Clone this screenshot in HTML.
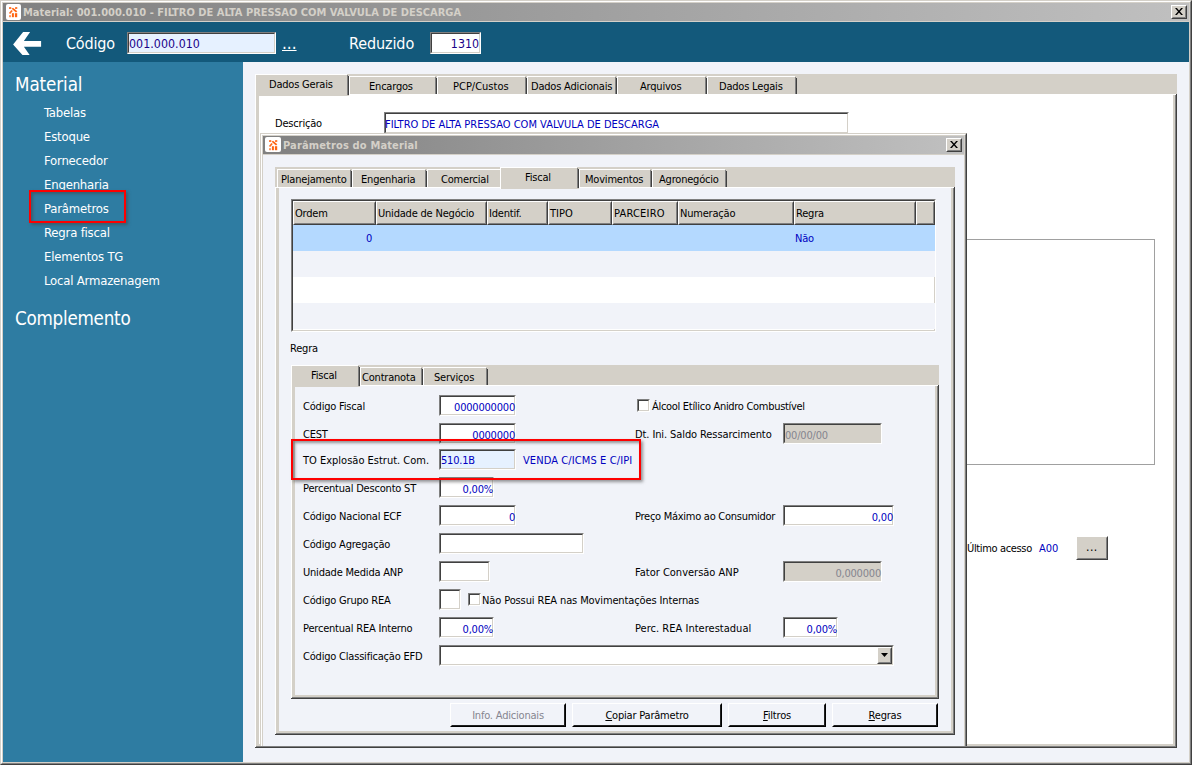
<!DOCTYPE html>
<html lang="pt-BR">
<head>
<meta charset="utf-8">
<title>Material: 001.000.010 - FILTRO DE ALTA PRESSAO COM VALVULA DE DESCARGA</title>
<style>
html,body{margin:0;padding:0;}
body{width:1192px;height:765px;overflow:hidden;background:#f1f3f9;position:relative;
 font-family:"DejaVu Sans Condensed","Liberation Sans",sans-serif;font-size:11px;color:#000;letter-spacing:-0.2px;}
.a{position:absolute;box-sizing:border-box;}
.t{position:absolute;white-space:nowrap;line-height:14px;height:14px;}
.nv{color:#0000c0;}
.dn{color:#180088;}
.up{letter-spacing:0;}
.gy{color:#85858f;}
.ed{position:absolute;box-sizing:border-box;background:#fff;border:1px solid;border-color:#808080 #fff #fff #808080;}
.ed:before{content:"";position:absolute;left:0;top:0;right:0;bottom:0;border:1px solid;border-color:#404040 #d4d0c8 #d4d0c8 #404040;}
.ed span{position:absolute;top:5px;line-height:14px;white-space:nowrap;}
.ed span.r{right:0px;}
.ed span.l{left:0px;}
.bt{position:absolute;box-sizing:border-box;border:1px solid;border-color:#fff #000 #000 #fff;text-align:center;line-height:24px;white-space:nowrap;}
.bt:before{content:"";position:absolute;left:0;top:0;right:0;bottom:0;border:1px solid;border-color:transparent #202020 #202020 transparent;}
.bt.cl{border-color:#fff #404040 #404040 #fff;}
.bt.cl:before{border-color:transparent #808080 #808080 transparent;}
.side{color:#fff;font-size:13px;line-height:16px;height:16px;left:44px;letter-spacing:-0.2px;}
.big{color:#fff;letter-spacing:0;}
.hd{position:absolute;box-sizing:border-box;background:#d4d0c8;border:1px solid;border-color:#fff #404040 #404040 #fff;top:201px;height:24px;line-height:24px;padding-left:1px;white-space:nowrap;overflow:hidden;}
.hd:before{content:"";position:absolute;left:0;top:0;right:0;bottom:0;border:1px solid;border-color:transparent #808080 #808080 transparent;}
.cb{position:absolute;box-sizing:border-box;width:13px;height:13px;background:#fff;border:1px solid;border-color:#808080 #fff #fff #808080;}
.cb:before{content:"";position:absolute;left:0;top:0;right:0;bottom:0;border:1px solid;border-color:#404040 #d4d0c8 #d4d0c8 #404040;}
.red{position:absolute;box-sizing:border-box;border:2px solid #fe0000;box-shadow:2px 2px 3px rgba(70,70,70,.55), inset 2px 2px 3px rgba(70,70,70,.55);}
</style>
</head>
<body>
<!-- window frame -->
<div class="a" style="left:0px;top:0px;width:1192px;height:765px;border:1px solid;border-color:#d4d0c8 #404040 #404040 #d4d0c8;"></div>
<div class="a" style="left:1px;top:1px;width:1190px;height:763px;border:1px solid;border-color:#fff #808080 #808080 #fff;"></div>
<div class="a" style="left:2px;top:2px;width:1188px;height:761px;border:1px solid #d4d0c8;"></div>
<div class="a" style="left:3px;top:3px;width:1186px;height:18px;background:linear-gradient(90deg,#808080,#c0c0c0);"></div>
<div class="a" style="left:3px;top:21px;width:1186px;height:1px;background:#d4d0c8;"></div>
<div class="a" style="left:5.500px;top:4.300px;width:15px;height:15.500px;background:#fff;border-radius:2px;"></div>
<svg class="a" style="left:5px;top:4px" width="15" height="15" viewBox="0 0 15 15"><g fill="#ff6410"><rect x="4" y="3" width="2.300" height="2" rx="0.600" opacity="0.850"/><rect x="10" y="3" width="2.300" height="2" rx="0.600" opacity="0.850"/><path d="M6.600 4.800L8 3.700L12.300 7.300L11 8.600z"/><path d="M3.900 8.900L6.400 6L7.800 7.100L5.200 10.100z" opacity="0.950"/><rect x="4.100" y="11.200" width="1.800" height="2" opacity="0.750"/><rect x="6.900" y="9.200" width="2" height="4"/><rect x="9.900" y="9.200" width="2.300" height="4"/></g></svg>
<div class="t" style="left:23px;top:6px;font-weight:bold;color:#d4d0c8;letter-spacing:0;">Material: 001.000.010 - FILTRO DE ALTA PRESSAO COM VALVULA DE DESCARGA</div>
<div class="bt cl" style="left:1171px;top:5px;width:16px;height:14px;background:#d4d0c8;"></div>
<svg class="a" style="left:1175px;top:8px" width="8" height="7" viewBox="0 0 8 7"><path d="M0 0h1.900L4 2.500 6.100 0H8L4.950 3.500 8 7H6.100L4 4.500 1.900 7H0L3.050 3.500z" fill="#000"/></svg>
<!-- header -->
<div class="a" style="left:3px;top:22px;width:1186px;height:40px;background:#13597b;"></div>
<svg class="a" style="left:13px;top:31px" width="30" height="26" viewBox="0 0 30 26"><path d="M0.100 13.600L10.100 0.900H17.100L10.900 9.900H28.100V15.800H10.900L16.650 24.100H9.450z" fill="#fff"/></svg>
<div class="t big" style="left:66px;top:33px;font-size:16px;line-height:22px;height:22px;letter-spacing:-0.2px;">Código</div>
<div class="ed" style="left:127px;top:32px;width:149px;height:22px;background:#e6f1ff;"><span class="l dn" style="font-size:12.300px;top:3px;left:1px;line-height:16px;letter-spacing:0.05px;">001.000.010</span></div>
<div class="t big" style="left:282px;top:33px;font-size:17px;line-height:20px;height:20px;letter-spacing:0;text-decoration:underline;">...</div>
<div class="t big" style="left:349px;top:33px;font-size:16px;line-height:22px;height:22px;letter-spacing:-0.1px;">Reduzido</div>
<div class="ed" style="left:430px;top:32px;width:51px;height:22px;background:#fff;"><span class="r dn" style="font-size:12.300px;top:3px;line-height:16px;letter-spacing:0;right:1px;">1310</span></div>
<!-- sidebar -->
<div class="a" style="left:3px;top:62px;width:240px;height:700px;background:#2e7ca2;"></div>
<div class="t big" style="left:15px;top:73px;font-size:18.670px;line-height:24px;height:24px;letter-spacing:-0.1px;">Material</div>
<div class="t side" style="top:105px;">Tabelas</div>
<div class="t side" style="top:129px;">Estoque</div>
<div class="t side" style="top:153px;">Fornecedor</div>
<div class="t side" style="top:177px;">Engenharia</div>
<div class="t side" style="top:201px;">Parâmetros</div>
<div class="t side" style="top:225px;">Regra fiscal</div>
<div class="t side" style="top:249px;">Elementos TG</div>
<div class="t side" style="top:273px;">Local Armazenagem</div>
<div class="t big" style="left:15px;top:307px;font-size:18.670px;line-height:24px;height:24px;letter-spacing:-0.25px;">Complemento</div>
<div class="red" style="left:29px;top:190px;width:97px;height:33px;"></div>
<!-- main tab control -->
<div class="a" style="left:255px;top:74px;width:922px;height:20px;background:#d4d0c8;"></div>
<div class="a" style="left:255px;top:94px;width:922px;height:654px;background:#fff;"></div>
<div class="a" style="left:255px;top:94px;width:922px;height:1px;background:#fff;"></div>
<div class="a" style="left:255px;top:94px;width:1px;height:654px;background:#fff;"></div>
<div class="a" style="left:256px;top:95px;width:3px;height:651px;background:#d4d0c8;"></div>
<div class="a" style="left:1173px;top:95px;width:2px;height:651px;background:#d4d0c8;"></div>
<div class="a" style="left:1175px;top:95px;width:1px;height:652px;background:#808080;"></div>
<div class="a" style="left:1176px;top:94px;width:1px;height:654px;background:#404040;"></div>
<div class="a" style="left:256px;top:744px;width:919px;height:2px;background:#d4d0c8;"></div>
<div class="a" style="left:256px;top:746px;width:920px;height:1px;background:#808080;"></div>
<div class="a" style="left:255px;top:747px;width:922px;height:1px;background:#404040;"></div>
<div class="a" style="left:255px;top:74px;width:94px;height:22px;background:#d4d0c8;"></div>
<div class="a" style="left:255px;top:74px;width:92px;height:1px;background:#fff;"></div>
<div class="a" style="left:255px;top:74px;width:1px;height:22px;background:#fff;"></div>
<div class="a" style="left:347px;top:75px;width:1px;height:20px;background:#808080;"></div>
<div class="a" style="left:348px;top:76px;width:1px;height:19px;background:#404040;"></div>
<div class="t " style="left:269px;top:78px;">Dados Gerais</div>
<div class="a" style="left:349px;top:76px;width:86px;height:1px;background:#fff;"></div>
<div class="a" style="left:349px;top:76px;width:1px;height:18px;background:#fff;"></div>
<div class="a" style="left:435px;top:77px;width:1px;height:17px;background:#808080;"></div>
<div class="a" style="left:436px;top:78px;width:1px;height:16px;background:#404040;"></div>
<div class="t " style="left:369px;top:80px;">Encargos</div>
<div class="a" style="left:437px;top:76px;width:88px;height:1px;background:#fff;"></div>
<div class="a" style="left:437px;top:76px;width:1px;height:18px;background:#fff;"></div>
<div class="a" style="left:525px;top:77px;width:1px;height:17px;background:#808080;"></div>
<div class="a" style="left:526px;top:78px;width:1px;height:16px;background:#404040;"></div>
<div class="t " style="left:453px;top:80px;"><span class="up">PCP/Custos</span></div>
<div class="a" style="left:527px;top:76px;width:88px;height:1px;background:#fff;"></div>
<div class="a" style="left:527px;top:76px;width:1px;height:18px;background:#fff;"></div>
<div class="a" style="left:615px;top:77px;width:1px;height:17px;background:#808080;"></div>
<div class="a" style="left:616px;top:78px;width:1px;height:16px;background:#404040;"></div>
<div class="t " style="left:531px;top:80px;">Dados Adicionais</div>
<div class="a" style="left:617px;top:76px;width:88px;height:1px;background:#fff;"></div>
<div class="a" style="left:617px;top:76px;width:1px;height:18px;background:#fff;"></div>
<div class="a" style="left:705px;top:77px;width:1px;height:17px;background:#808080;"></div>
<div class="a" style="left:706px;top:78px;width:1px;height:16px;background:#404040;"></div>
<div class="t " style="left:640px;top:80px;">Arquivos</div>
<div class="a" style="left:707px;top:76px;width:88px;height:1px;background:#fff;"></div>
<div class="a" style="left:707px;top:76px;width:1px;height:18px;background:#fff;"></div>
<div class="a" style="left:795px;top:77px;width:1px;height:17px;background:#808080;"></div>
<div class="a" style="left:796px;top:78px;width:1px;height:16px;background:#404040;"></div>
<div class="t " style="left:719px;top:80px;">Dados Legais</div>
<div class="t " style="left:275px;top:117px;">Descrição</div>
<div class="ed" style="left:384px;top:112px;width:465px;height:22px;background:#fff;"><span class="l nv up" style="">FILTRO DE ALTA PRESSAO COM VALVULA DE DESCARGA</span></div>
<div class="a" style="left:966px;top:239px;width:189px;height:226px;border:1px solid #a0a0a0;background:#fff;"></div>
<div class="t " style="left:967px;top:542px;letter-spacing:-0.35px;">Último acesso</div>
<div class="t nv up" style="left:1039px;top:542px;">A00</div>
<div class="bt cl" style="left:1076px;top:536px;width:32px;height:24px;background:#d4d0c8;"></div>
<div class="t" style="left:1086px;top:540px;font-size:12px;letter-spacing:0.5px;">...</div>
<!-- dialog: Parâmetros do Material -->
<div class="a" style="left:260px;top:133px;width:707px;height:613px;overflow:hidden;">
<div class="a" style="left:0;top:0;width:707px;height:640px;background:#f1f3f9;border:1px solid;border-color:#d4d0c8 #404040 #404040 #d4d0c8;"></div>
<div class="a" style="left:1px;top:1px;width:705px;height:638px;border:1px solid;border-color:#fff #808080 #808080 #fff;"></div>
<div class="a" style="left:2px;top:2px;width:703px;height:636px;border:1px solid;border-color:#d4d0c8;"></div>
</div>
<div class="a" style="left:263px;top:136px;width:701px;height:18px;background:linear-gradient(90deg,#808080,#c0c0c0);"></div>
<div class="a" style="left:263px;top:154px;width:701px;height:1px;background:#d4d0c8;"></div>
<div class="a" style="left:265.300px;top:137px;width:15.300px;height:15.300px;background:#fff;border-radius:2px;"></div>
<svg class="a" style="left:265px;top:137px" width="15" height="15" viewBox="0 0 15 15"><g fill="#ff6410"><rect x="4" y="3" width="2.300" height="2" rx="0.600" opacity="0.850"/><rect x="10" y="3" width="2.300" height="2" rx="0.600" opacity="0.850"/><path d="M6.600 4.800L8 3.700L12.300 7.300L11 8.600z"/><path d="M3.900 8.900L6.400 6L7.800 7.100L5.200 10.100z" opacity="0.950"/><rect x="4.100" y="11.200" width="1.800" height="2" opacity="0.750"/><rect x="6.900" y="9.200" width="2" height="4"/><rect x="9.900" y="9.200" width="2.300" height="4"/></g></svg>
<div class="t" style="left:283px;top:139px;font-weight:bold;color:#d4d0c8;letter-spacing:0.15px;">Parâmetros do Material</div>
<div class="bt cl" style="left:946px;top:138px;width:16px;height:14px;background:#d4d0c8;"></div>
<svg class="a" style="left:950px;top:141px" width="8" height="7" viewBox="0 0 8 7"><path d="M0 0h1.900L4 2.500 6.100 0H8L4.950 3.500 8 7H6.100L4 4.500 1.900 7H0L3.050 3.500z" fill="#000"/></svg>
<div class="a" style="left:275px;top:167px;width:680px;height:20px;background:#d4d0c8;"></div>
<div class="a" style="left:275px;top:187px;width:680px;height:548px;background:#f1f3f9;"></div>
<div class="a" style="left:275px;top:187px;width:680px;height:1px;background:#fff;"></div>
<div class="a" style="left:275px;top:187px;width:1px;height:548px;background:#fff;"></div>
<div class="a" style="left:276px;top:188px;width:3px;height:545px;background:#d4d0c8;"></div>
<div class="a" style="left:951px;top:188px;width:2px;height:545px;background:#d4d0c8;"></div>
<div class="a" style="left:953px;top:188px;width:1px;height:546px;background:#808080;"></div>
<div class="a" style="left:954px;top:187px;width:1px;height:548px;background:#404040;"></div>
<div class="a" style="left:276px;top:731px;width:677px;height:2px;background:#d4d0c8;"></div>
<div class="a" style="left:276px;top:733px;width:678px;height:1px;background:#808080;"></div>
<div class="a" style="left:275px;top:734px;width:680px;height:1px;background:#404040;"></div>
<div class="a" style="left:277px;top:169px;width:73px;height:1px;background:#fff;"></div>
<div class="a" style="left:277px;top:169px;width:1px;height:18px;background:#fff;"></div>
<div class="a" style="left:350px;top:170px;width:1px;height:17px;background:#808080;"></div>
<div class="a" style="left:351px;top:171px;width:1px;height:16px;background:#404040;"></div>
<div class="t " style="left:281px;top:173px;">Planejamento</div>
<div class="a" style="left:352px;top:169px;width:73px;height:1px;background:#fff;"></div>
<div class="a" style="left:352px;top:169px;width:1px;height:18px;background:#fff;"></div>
<div class="a" style="left:425px;top:170px;width:1px;height:17px;background:#808080;"></div>
<div class="a" style="left:426px;top:171px;width:1px;height:16px;background:#404040;"></div>
<div class="t " style="left:361px;top:173px;">Engenharia</div>
<div class="a" style="left:427px;top:169px;width:74px;height:1px;background:#fff;"></div>
<div class="a" style="left:427px;top:169px;width:1px;height:18px;background:#fff;"></div>
<div class="t " style="left:441px;top:173px;">Comercial</div>
<div class="a" style="left:500px;top:167px;width:79px;height:22px;background:#d4d0c8;"></div>
<div class="a" style="left:500px;top:167px;width:77px;height:1px;background:#fff;"></div>
<div class="a" style="left:500px;top:167px;width:1px;height:22px;background:#fff;"></div>
<div class="a" style="left:577px;top:168px;width:1px;height:20px;background:#808080;"></div>
<div class="a" style="left:578px;top:169px;width:1px;height:19px;background:#404040;"></div>
<div class="t " style="left:525px;top:171px;">Fiscal</div>
<div class="a" style="left:579px;top:169px;width:71px;height:1px;background:#fff;"></div>
<div class="a" style="left:579px;top:169px;width:1px;height:18px;background:#fff;"></div>
<div class="a" style="left:650px;top:170px;width:1px;height:17px;background:#808080;"></div>
<div class="a" style="left:651px;top:171px;width:1px;height:16px;background:#404040;"></div>
<div class="t " style="left:585px;top:173px;">Movimentos</div>
<div class="a" style="left:652px;top:169px;width:73px;height:1px;background:#fff;"></div>
<div class="a" style="left:652px;top:169px;width:1px;height:18px;background:#fff;"></div>
<div class="a" style="left:725px;top:170px;width:1px;height:17px;background:#808080;"></div>
<div class="a" style="left:726px;top:171px;width:1px;height:16px;background:#404040;"></div>
<div class="t " style="left:659px;top:173px;">Agronegócio</div>
<!-- grid -->
<div class="ed" style="left:291px;top:199px;width:645px;height:133px;background:#fff;"></div>
<div class="a" style="left:293px;top:201px;width:642px;height:24px;background:#d4d0c8;"></div>
<div class="hd" style="left:293px;width:83px;">Ordem</div>
<div class="hd" style="left:376px;width:111px;">Unidade de Negócio</div>
<div class="hd" style="left:487px;width:61px;">Identif.</div>
<div class="hd" style="left:548px;width:64px;"><span class="up">TIPO</span></div>
<div class="hd" style="left:612px;width:66px;"><span style="letter-spacing:0.2px">PARCEIRO</span></div>
<div class="hd" style="left:678px;width:116px;">Numeração</div>
<div class="hd" style="left:794px;width:122px;">Regra</div>
<div class="hd" style="left:916px;width:19px;"></div>
<div class="a" style="left:293px;top:225px;width:642px;height:26px;background:#b4d9ff;"></div>
<div class="a" style="left:293px;top:251px;width:642px;height:26px;background:#f1f3f9;"></div>
<div class="a" style="left:293px;top:303px;width:642px;height:26px;background:#f1f3f9;"></div>
<div class="t nv" style="left:340px;width:32px;text-align:right;top:232px;">0</div>
<div class="t nv" style="left:795px;top:232px;">Não</div>
<div class="t " style="left:290px;top:342px;">Regra</div>
<div class="a" style="left:291px;top:365px;width:648px;height:20px;background:#d4d0c8;"></div>
<div class="a" style="left:291px;top:385px;width:648px;height:314px;background:#f1f3f9;"></div>
<div class="a" style="left:291px;top:385px;width:648px;height:1px;background:#fff;"></div>
<div class="a" style="left:291px;top:385px;width:1px;height:314px;background:#fff;"></div>
<div class="a" style="left:292px;top:386px;width:3px;height:311px;background:#d4d0c8;"></div>
<div class="a" style="left:935px;top:386px;width:2px;height:311px;background:#d4d0c8;"></div>
<div class="a" style="left:937px;top:386px;width:1px;height:312px;background:#808080;"></div>
<div class="a" style="left:938px;top:385px;width:1px;height:314px;background:#404040;"></div>
<div class="a" style="left:292px;top:695px;width:645px;height:2px;background:#d4d0c8;"></div>
<div class="a" style="left:292px;top:697px;width:646px;height:1px;background:#808080;"></div>
<div class="a" style="left:291px;top:698px;width:648px;height:1px;background:#404040;"></div>
<div class="a" style="left:291px;top:365px;width:69px;height:22px;background:#d4d0c8;"></div>
<div class="a" style="left:291px;top:365px;width:67px;height:1px;background:#fff;"></div>
<div class="a" style="left:291px;top:365px;width:1px;height:22px;background:#fff;"></div>
<div class="a" style="left:358px;top:366px;width:1px;height:20px;background:#808080;"></div>
<div class="a" style="left:359px;top:367px;width:1px;height:19px;background:#404040;"></div>
<div class="t " style="left:311px;top:369px;">Fiscal</div>
<div class="a" style="left:360px;top:367px;width:61px;height:1px;background:#fff;"></div>
<div class="a" style="left:360px;top:367px;width:1px;height:18px;background:#fff;"></div>
<div class="a" style="left:421px;top:368px;width:1px;height:17px;background:#808080;"></div>
<div class="a" style="left:422px;top:369px;width:1px;height:16px;background:#404040;"></div>
<div class="t " style="left:362px;top:371px;">Contranota</div>
<div class="a" style="left:423px;top:367px;width:63px;height:1px;background:#fff;"></div>
<div class="a" style="left:423px;top:367px;width:1px;height:18px;background:#fff;"></div>
<div class="a" style="left:486px;top:368px;width:1px;height:17px;background:#808080;"></div>
<div class="a" style="left:487px;top:369px;width:1px;height:16px;background:#404040;"></div>
<div class="t " style="left:434px;top:371px;">Serviços</div>
<!-- form -->
<div class="t " style="left:303px;top:400px;">Código Fiscal</div>
<div class="ed" style="left:439px;top:395px;width:77px;height:21px;background:#fff;"><span class="r nv" style="">0000000000</span></div>
<div class="t " style="left:303px;top:428px;">CEST</div>
<div class="ed" style="left:439px;top:423px;width:77px;height:21px;background:#fff;"><span class="r nv" style="">0000000</span></div>
<div class="t " style="left:303px;top:454px;letter-spacing:0;">TO Explosão Estrut. Com.</div>
<div class="ed" style="left:439px;top:449px;width:77px;height:21px;background:#e6f1ff;"><span class="l nv" style="top:4px;left:1px;">510.1B</span></div>
<div class="t nv" style="left:523px;top:454px;letter-spacing:0.1px;">VENDA C/ICMS E C/IPI</div>
<div class="t " style="left:303px;top:482px;">Percentual Desconto ST</div>
<div class="ed" style="left:439px;top:477px;width:55px;height:21px;background:#fff;"><span class="r nv" style="">0,00%</span></div>
<div class="t " style="left:303px;top:510px;">Código Nacional ECF</div>
<div class="ed" style="left:439px;top:505px;width:77px;height:21px;background:#fff;"><span class="r nv" style="">0</span></div>
<div class="t " style="left:303px;top:538px;">Código Agregação</div>
<div class="ed" style="left:439px;top:533px;width:145px;height:21px;background:#fff;"></div>
<div class="t " style="left:303px;top:566px;">Unidade Medida ANP</div>
<div class="ed" style="left:439px;top:561px;width:51px;height:21px;background:#fff;"></div>
<div class="t " style="left:303px;top:594px;">Código Grupo REA</div>
<div class="ed" style="left:439px;top:589px;width:22px;height:21px;background:#fff;"></div>
<div class="cb" style="left:468px;top:593px;"></div>
<div class="t " style="left:482px;top:594px;letter-spacing:-0.12px;">Não Possui REA nas Movimentações Internas</div>
<div class="t " style="left:303px;top:622px;">Percentual REA Interno</div>
<div class="ed" style="left:439px;top:617px;width:55px;height:21px;background:#fff;"><span class="r nv" style="">0,00%</span></div>
<div class="t " style="left:303px;top:650px;">Código Classificação EFD</div>
<div class="ed" style="left:439px;top:645px;width:455px;height:21px;background:#fff;"></div>
<div class="bt cl" style="left:877px;top:647px;width:15px;height:17px;background:#d4d0c8;"></div>
<svg class="a" style="left:881px;top:653px" width="7" height="4" viewBox="0 0 7 4"><path d="M0 0h7l-3.500 4z" fill="#000"/></svg>
<div class="cb" style="left:637px;top:399px;"></div>
<div class="t " style="left:652px;top:400px;letter-spacing:-0.3px;">Álcool Etílico Anidro Combustível</div>
<div class="t " style="left:635px;top:428px;letter-spacing:-0.1px;">Dt. Ini. Saldo Ressarcimento</div>
<div class="ed" style="left:783px;top:423px;width:99px;height:21px;background:#d4d0c8;"><span class="l gy" style="left:1px;">00/00/00</span></div>
<div class="t " style="left:635px;top:510px;letter-spacing:-0.27px;">Preço Máximo ao Consumidor</div>
<div class="ed" style="left:783px;top:505px;width:111px;height:21px;background:#fff;"><span class="r nv" style="">0,00</span></div>
<div class="t " style="left:635px;top:566px;letter-spacing:0;">Fator Conversão ANP</div>
<div class="ed" style="left:783px;top:561px;width:99px;height:21px;background:#d4d0c8;"><span class="r gy" style="">0,000000</span></div>
<div class="t " style="left:635px;top:622px;letter-spacing:0.02px;">Perc. REA Interestadual</div>
<div class="ed" style="left:783px;top:617px;width:55px;height:21px;background:#fff;"><span class="r nv" style="">0,00%</span></div>
<div class="red" style="left:291px;top:439px;width:350px;height:41px;"></div>
<!-- buttons -->
<div class="bt gy" style="left:450px;top:703px;width:116px;height:24px;background:#f1f3f9;">Info. Adicionais</div>
<div class="bt " style="left:572px;top:703px;width:150px;height:24px;background:#f1f3f9;"><u>C</u>opiar Parâmetro</div>
<div class="bt " style="left:728px;top:703px;width:98px;height:24px;background:#f1f3f9;"><u>F</u>iltros</div>
<div class="bt " style="left:832px;top:703px;width:106px;height:24px;background:#f1f3f9;"><u>R</u>egras</div>
</body>
</html>
